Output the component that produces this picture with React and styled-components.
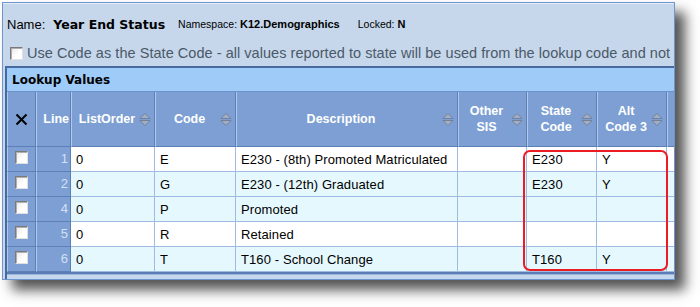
import React from 'react'
import styled, { createGlobalStyle } from 'styled-components'

const GlobalStyle = createGlobalStyle`
  * { box-sizing: border-box; }
  html, body { margin: 0; padding: 0; background: #ffffff; }
  body { font-family: 'Liberation Sans', Arial, sans-serif; }
`

const Page = styled.div`
  width: 700px;
  height: 307px;
  padding: 2px 0 0 2px;
`

const Window = styled.div`
  width: 673px;
  height: 278px;
  border: 1px solid #6d96cf;
  background: #c6d7eb;
  overflow: hidden;
  box-shadow: 10px 10px 12px rgba(0, 0, 0, 0.68);
  display: flex;
  flex-direction: column;
`

const Info = styled.div`
  height: 63px;
  padding: 7px 0 0 4px;
  display: flex;
  flex-direction: column;
  gap: 6px;
  border-top: 1px solid #e4edf7;
`

const NameRow = styled.div`
  height: 26px;
  display: flex;
  align-items: center;
  color: #000;
  white-space: nowrap;
`

const Label = styled.span`
  font-size: ${p => (p.small ? '10.5px' : '13px')};
  margin-right: ${p => p.gap || 0}px;
`

const Value = styled.span`
  font-family: ${p => (p.small ? "'Liberation Sans', Arial" : "'DejaVu Sans', Verdana")}, sans-serif;
  font-weight: bold;
  font-size: ${p => (p.small ? '11px' : '12.5px')};
  margin-right: ${p => p.gap || 0}px;
`

const CheckRow = styled.label`
  height: 20px;
  display: flex;
  align-items: center;
  gap: 4px;
  padding-left: 3px;
  font-size: 14.5px;
  letter-spacing: 0.04px;
  color: #4b5968;
  white-space: nowrap;
  overflow: hidden;
`

const Box = styled.span`
  flex: none;
  display: inline-block;
  width: 13px;
  height: 13px;
  background: linear-gradient(135deg, #e8e8e8, #ffffff 60%);
  border: 1px solid;
  border-color: #7a7a7a #e0e0e0 #e0e0e0 #7a7a7a;
  box-shadow: inset 1px 1px 0 #b0b0b0;
`

const Panel = styled.div`
  margin-left: 2px;
  border-top: 2px solid #46699f;
  border-left: 2px solid #46699f;
  flex: 1;
  display: flex;
  flex-direction: column;
`

const PanelTitle = styled.div`
  height: 24px;
  background: #9ecbf8;
  border-bottom: 1px solid #6b93c9;
  padding-left: 5px;
  display: flex;
  align-items: center;
  font-family: 'DejaVu Sans', Verdana, sans-serif;
  font-weight: bold;
  font-size: 12px;
  color: #000;
`

const TableWrap = styled.div`
  position: relative;
`

const Grid = styled.table`
  border-spacing: 0;
  table-layout: fixed;
  width: 690px;
`

const Head = styled.th`
  height: 55px;
  padding: 0;
  background: #7d9fd3;
  border-left: 1px solid #b3c9ea;
  border-right: 1px solid #5b7fb7;
  border-bottom: 1px solid #5b7fb7;
  color: #fff;
  font-size: 12.5px;
  font-weight: bold;
  line-height: 16px;
  width: ${p => p.w}px;
`

const HeadInner = styled.div`
  display: flex;
  align-items: center;
  justify-content: ${p => (p.right ? 'flex-end' : 'center')};
  padding: 0 ${p => (p.right ? 1 : 3)}px 0 3px;
  height: 100%;
`

const HeadLabel = styled.span`
  flex: 1;
  text-align: ${p => (p.right ? 'right' : 'center')};
`

const Row = styled.tr`
  height: 25px;
`

const SideCell = styled.td`
  padding: 0 ${p => (p.num ? 2 : 0)}px 0 0;
  background: #7d9fd3;
  border-left: 1px solid #b3c9ea;
  border-right: 1px solid #5b7fb7;
  border-bottom: 1px solid #5b7fb7;
  text-align: ${p => (p.num ? 'right' : 'center')};
  color: #d2e1f6;
  font-size: 13px;
  line-height: 16px;
`

const Cell = styled.td`
  padding: 0 0 0 5px;
  background: ${p => (p.alt ? '#e5f8fd' : '#ffffff')};
  border-right: 1px solid #9fbbe2;
  border-bottom: 1px solid #9fbbe2;
  font-size: 13px;
  letter-spacing: 0.1px;
  color: #000;
  white-space: nowrap;
  overflow: hidden;
`

const Highlight = styled.div`
  position: absolute;
  left: 516px;
  top: 58px;
  width: 145px;
  height: 121px;
  border: 2px solid #ec1c24;
  border-radius: 7px;
  pointer-events: none;
`

const Footer = styled.div`
  height: 3px;
  background: #5a7db5;
  border-bottom: 1px solid #9ab4da;
`

const SortIcon = () => (
  <svg width="12" height="15" viewBox="0 0 12 15" style={{ flex: 'none' }}>
    <path d="M1 6.5 L6 1.5 L11 6.5 Z" fill="#a3aec2" stroke="#6b7891" strokeWidth="0.8" />
    <path d="M1 8.5 L6 13.5 L11 8.5 Z" fill="#a3aec2" stroke="#6b7891" strokeWidth="0.8" />
  </svg>
)

const CloseIcon = () => (
  <svg width="13" height="13" viewBox="0 0 13 13">
    <path d="M1.5 1.5 L11.5 11.5 M11.5 1.5 L1.5 11.5" stroke="#000" strokeWidth="2" />
  </svg>
)

const columns = [
  { key: 'order', label: 'ListOrder', w: 84 },
  { key: 'code', label: 'Code', w: 81 },
  { key: 'desc', label: 'Description', w: 222 },
  { key: 'other', label: ['Other', 'SIS'], w: 69 },
  { key: 'state', label: ['State', 'Code'], w: 70 },
  { key: 'alt', label: ['Alt', 'Code 3'], w: 70 }
]

const rows = [
  { line: 1, order: '0', code: 'E', desc: 'E230 - (8th) Promoted Matriculated', other: '', state: 'E230', alt: 'Y' },
  { line: 2, order: '0', code: 'G', desc: 'E230 - (12th) Graduated', other: '', state: 'E230', alt: 'Y' },
  { line: 4, order: '0', code: 'P', desc: 'Promoted', other: '', state: '', alt: '' },
  { line: 5, order: '0', code: 'R', desc: 'Retained', other: '', state: '', alt: '' },
  { line: 6, order: '0', code: 'T', desc: 'T160 - School Change', other: '', state: 'T160', alt: 'Y' }
]

export default function App() {
  return (
    <Page>
      <GlobalStyle />
      <Window>
        <Info>
          <NameRow>
            <Label gap={8}>Name:</Label>
            <Value gap={13}>Year End Status</Value>
            <Label small gap={3}>Namespace:</Label>
            <Value small gap={18}>K12.Demographics</Value>
            <Label small gap={3}>Locked:</Label>
            <Value small>N</Value>
          </NameRow>
          <CheckRow>
            <Box />
            Use Code as the State Code - all values reported to state will be used from the lookup code and not
          </CheckRow>
        </Info>

        <Panel>
          <PanelTitle>Lookup Values</PanelTitle>
          <TableWrap>
            <Grid>
              <thead>
                <tr>
                  <Head w={29}>
                    <HeadInner>
                      <CloseIcon />
                    </HeadInner>
                  </Head>
                  <Head w={35}>
                    <HeadInner right>
                      <HeadLabel right>Line</HeadLabel>
                    </HeadInner>
                  </Head>
                  {columns.map(col => (
                    <Head key={col.key} w={col.w}>
                      <HeadInner>
                        <HeadLabel>
                          {Array.isArray(col.label) ? (
                            <>
                              {col.label[0]}
                              <br />
                              {col.label[1]}
                            </>
                          ) : (
                            col.label
                          )}
                        </HeadLabel>
                        <SortIcon />
                      </HeadInner>
                    </Head>
                  ))}
                  <Head w={30} />
                </tr>
              </thead>
              <tbody>
                {rows.map(row => {
                  const alt = row.line % 2 === 0
                  return (
                    <Row key={row.line}>
                      <SideCell>
                        <Box />
                      </SideCell>
                      <SideCell num>{row.line}</SideCell>
                      {columns.map(col => (
                        <Cell key={col.key} alt={alt}>
                          {row[col.key]}
                        </Cell>
                      ))}
                      <Cell alt={alt} />
                    </Row>
                  )
                })}
              </tbody>
            </Grid>
            <Highlight />
          </TableWrap>
          <Footer />
        </Panel>
      </Window>
    </Page>
  )
}
